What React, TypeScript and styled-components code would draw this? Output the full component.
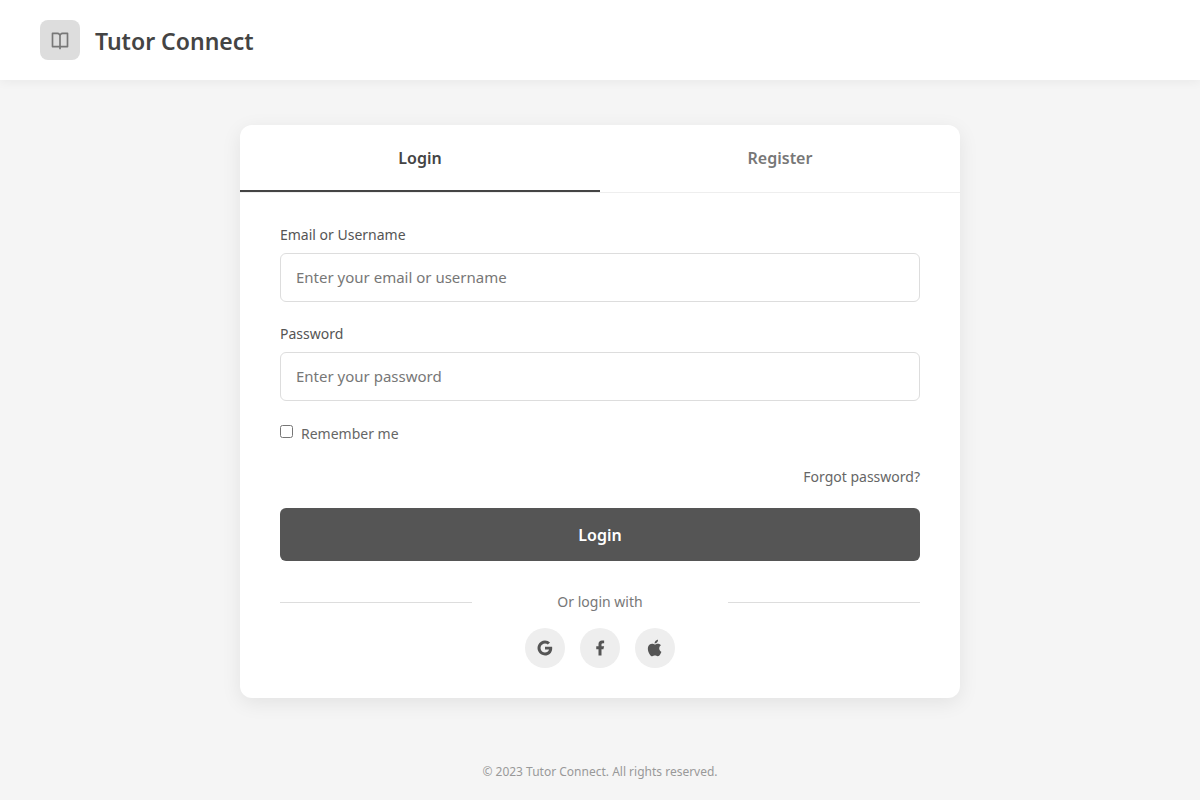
import React from 'react';
import styled, { createGlobalStyle } from 'styled-components';
import { RiAppleFill, RiBookOpenLine, RiFacebookFill, RiGoogleFill } from 'react-icons/ri';

const GlobalStyle = createGlobalStyle`
  * { box-sizing: border-box; }
  body {
    margin: 0;
    background: #f5f5f5;
    color: #444;
    font-family: 'Noto Sans', 'Open Sans', sans-serif;
    font-size: 14px;
    line-height: 22px;
  }
  button, input { font-family: inherit; }
`;

const Page = styled.div`
  display: flex;
  flex-direction: column;
  min-height: 100vh;
`;

const Header = styled.header`
  display: flex;
  align-items: center;
  gap: 15px;
  padding: 20px 40px;
  background: #fff;
  box-shadow: 0 2px 10px rgba(0, 0, 0, 0.05);
`;

const LogoMark = styled.span`
  display: flex;
  align-items: center;
  justify-content: center;
  width: 40px;
  height: 40px;
  border-radius: 8px;
  background: #ddd;
  color: #777;
  font-size: 20px;
`;

const Brand = styled.h1`
  margin: 0;
  padding-top: 2px;
  font-size: 23px;
  line-height: 38px;
  font-weight: 600;
`;

const Main = styled.main`
  flex: 1;
  display: flex;
  align-items: center;
  justify-content: center;
  padding: 45px 20px;
`;

const Card = styled.section`
  width: 100%;
  max-width: 720px;
  overflow: hidden;
  border-radius: 12px;
  background: #fff;
  box-shadow: 0 5px 20px rgba(0, 0, 0, 0.08);
`;

const Tabs = styled.div`
  display: flex;
  border-bottom: 1px solid #eee;
`;

const Tab = styled.button<{ $active?: boolean }>`
  flex: 1;
  padding: 21px 20px 19px;
  border: 0;
  border-bottom: 2px solid ${(p) => (p.$active ? '#444' : 'transparent')};
  background: none;
  color: ${(p) => (p.$active ? '#444' : '#777')};
  font-size: 16px;
  line-height: 25px;
  font-weight: 600;
  cursor: pointer;
`;

const Form = styled.form`
  display: flex;
  flex-direction: column;
  gap: 20px;
  padding: 30px 40px;
`;

const Field = styled.div`
  display: flex;
  flex-direction: column;
  gap: 8px;
`;

const Label = styled.label`
  padding-top: 1px;
  line-height: 21px;
  color: #555;
`;

const TextInput = styled.input`
  width: 100%;
  padding: 12px 15px;
  border: 1px solid #ddd;
  border-radius: 6px;
  background: #fff;
  color: #444;
  font-size: 15px;
  line-height: 23px;
  &::placeholder { color: #777; }
`;

const Remember = styled.label`
  display: flex;
  align-items: flex-start;
  align-self: flex-start;
  gap: 8px;
  padding-top: 1px;
  color: #666;
  line-height: 24px;
`;

const Checkbox = styled.input`
  width: 13px;
  height: 13px;
  margin: 3px 0 0;
`;

const ForgotLink = styled.a`
  align-self: flex-end;
  color: #666;
  text-decoration: none;
`;

const SubmitButton = styled.button`
  padding: 15px 20px 13px;
  border: 0;
  border-radius: 6px;
  background: #555;
  color: #fff;
  font-size: 16px;
  line-height: 25px;
  font-weight: 600;
  cursor: pointer;
`;

const Social = styled.div`
  display: flex;
  flex-direction: column;
  gap: 15px;
  padding-top: 10px;
`;

const Divider = styled.div`
  display: flex;
  align-items: center;
  justify-content: space-between;
  color: #777;
  &::before, &::after {
    content: '';
    width: 30%;
    height: 1px;
    background: #ddd;
  }
`;

const SocialButtons = styled.div`
  display: flex;
  justify-content: center;
  gap: 15px;
`;

const SocialButton = styled.button`
  display: flex;
  align-items: center;
  justify-content: center;
  width: 40px;
  height: 40px;
  padding: 0;
  border: 0;
  border-radius: 50%;
  background: #eee;
  color: #555;
  font-size: 18px;
  cursor: pointer;
`;

const Footer = styled.footer`
  padding: 18px 20px;
  color: #999;
  font-size: 12px;
  line-height: 21px;
  text-align: center;
`;

export default function App() {
  return (
    <Page>
      <GlobalStyle />
      <Header>
        <LogoMark><RiBookOpenLine /></LogoMark>
        <Brand>Tutor Connect</Brand>
      </Header>
      <Main>
        <Card>
          <Tabs>
            <Tab type="button" $active>Login</Tab>
            <Tab type="button">Register</Tab>
          </Tabs>
          <Form onSubmit={(e) => e.preventDefault()}>
            <Field>
              <Label htmlFor="email">Email or Username</Label>
              <TextInput id="email" type="text" placeholder="Enter your email or username" />
            </Field>
            <Field>
              <Label htmlFor="password">Password</Label>
              <TextInput id="password" type="password" placeholder="Enter your password" />
            </Field>
            <Remember>
              <Checkbox type="checkbox" />
              Remember me
            </Remember>
            <ForgotLink href="#forgot">Forgot password?</ForgotLink>
            <SubmitButton type="submit">Login</SubmitButton>
            <Social>
              <Divider>Or login with</Divider>
              <SocialButtons>
                <SocialButton type="button" aria-label="Login with Google"><RiGoogleFill /></SocialButton>
                <SocialButton type="button" aria-label="Login with Facebook"><RiFacebookFill /></SocialButton>
                <SocialButton type="button" aria-label="Login with Apple"><RiAppleFill /></SocialButton>
              </SocialButtons>
            </Social>
          </Form>
        </Card>
      </Main>
      <Footer>© 2023 Tutor Connect. All rights reserved.</Footer>
    </Page>
  );
}
